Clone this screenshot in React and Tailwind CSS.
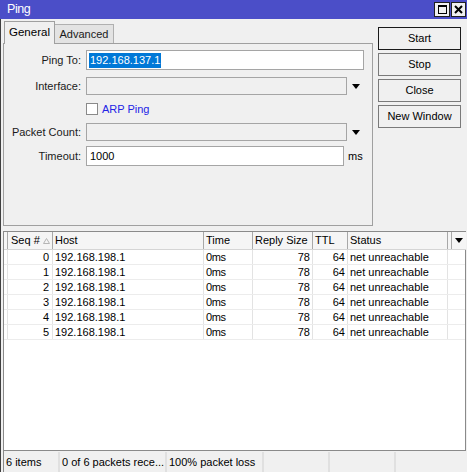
const rows = [0, 1, 2, 3, 4, 5].map((n) => ({
  seq: n,
  host: "192.168.198.1",
  time: "0ms",
  size: 78,
  ttl: 64,
  status: "net unreachable",
}))

function Arrow() {
  return (
    <svg width="8" height="5" viewBox="0 0 8 5" className="block">
      <path d="M0 0H8L4 5Z" fill="#000" />
    </svg>
  )
}

function Button({ children, primary }) {
  return (
    <div
      className={
        "h-[23px] flex items-center justify-center bg-[#f0f0f0] border " +
        (primary ? "border-[#1a1a1a]" : "border-[#7a7a7a]")
      }
    >
      {children}
    </div>
  )
}

function Row({ label, children, className }) {
  return (
    <div className={"flex items-center " + className}>
      <div className="w-[77px] text-right text-[#1a1a1a]">{label}</div>
      <div className="ml-[5px] flex items-center flex-1">{children}</div>
    </div>
  )
}

export default function App() {
  const col = "border-r border-[#e3e3e3]"
  return (
    <div className="w-[467px] h-[472px] bg-[#f0f0f0] flex flex-col overflow-hidden text-[11px] leading-none text-black font-['Liberation_Sans',Arial,sans-serif]">
      {/* title bar */}
      <div className="h-[19px] bg-[#4b4ec8] flex items-center justify-between pl-[7px] pr-[1px]">
        <span className="text-white text-[12.5px] tracking-[-0.4px]">Ping</span>
        <div className="flex gap-[1px]">
          <div className="w-[16px] h-[15px] bg-[#f0f0f0] border border-[#202020] flex items-center justify-center">
            <div className="w-[9px] h-[9px] border border-black border-t-2" />
          </div>
          <div className="w-[15px] h-[15px] bg-[#f0f0f0] border border-[#202020] flex items-center justify-center">
            <svg width="9" height="9" viewBox="0 0 9 9">
              <path d="M1 1L8 8M8 1L1 8" stroke="#000" strokeWidth="2" />
            </svg>
          </div>
        </div>
      </div>

      <div className="flex-1 flex flex-col border-l border-[#404040]">
        {/* top section */}
        <div className="flex h-[207px]">
          <div className="ml-[2px] w-[370px] flex flex-col">
            <div className="h-[24px] flex items-end pl-[1px]">
              <div className="h-[23px] w-[51px] border border-b-0 border-[#a0a0a0] bg-[#f0f0f0] flex items-center justify-center relative top-[1px] text-[11.5px]">
                General
              </div>
              <div className="h-[19px] w-[59px] border border-b-0 border-l-0 border-[#b0b0b0] bg-[#e3e3e3] flex items-center justify-center text-[#1a1a1a]">
                Advanced
              </div>
            </div>
            <div className="flex-1 border border-[#a0a0a0] flex flex-col">
              <Row label="Ping To:" className="mt-[6px] h-[20px]">
                <div className="w-[278px] h-[20px] bg-white border border-[#a5a5a5] flex items-center pl-[2px]">
                  <span className="bg-[#0078d7] text-white px-[1px] py-[2px]">192.168.137.1</span>
                </div>
              </Row>
              <Row label="Interface:" className="mt-[7px] h-[18px]">
                <div className="w-[261px] h-[18px] border border-[#a5a5a5]" />
                <div className="ml-[5px]">
                  <Arrow />
                </div>
              </Row>
              <Row label="" className="mt-[6px] h-[16px]">
                <div className="w-[12px] h-[12px] bg-white border border-[#8a8a8a]" />
                <span className="ml-[4px] text-[#2323e6]">ARP Ping</span>
              </Row>
              <Row label="Packet Count:" className="mt-[6px] h-[18px]">
                <div className="w-[261px] h-[18px] border border-[#a5a5a5]" />
                <div className="ml-[5px]">
                  <Arrow />
                </div>
              </Row>
              <Row label="Timeout:" className="mt-[5px] h-[20px]">
                <div className="w-[258px] h-[20px] bg-white border border-[#a5a5a5] flex items-center pl-[3px]">
                  1000
                </div>
                <span className="ml-[4px]">ms</span>
              </Row>
            </div>
          </div>
          <div className="ml-[5px] w-[83px] pt-[8px] flex flex-col gap-[3px]">
            <Button primary>Start</Button>
            <Button>Stop</Button>
            <Button>Close</Button>
            <Button>New Window</Button>
          </div>
        </div>

        {/* table */}
        <div className="mt-[5px] ml-[2px] mr-[1px] flex-1 flex flex-col border-l border-t border-[#8a8a8a]">
          <div className="h-[18px] flex bg-[#f5f5f5] border-b border-[#d5d5d5]">
            <div className="w-[4px] border-r border-[#a8a8a8]" />
            <div className="w-[45px] border-r border-[#a8a8a8] flex items-center pl-[3px]">
              Seq #
              <svg width="7" height="6" viewBox="0 0 7 6" className="ml-[3px]">
                <path d="M3.5 0.5L6.5 5.5H0.5Z" fill="none" stroke="#b5b5b5" />
              </svg>
            </div>
            <div className="w-[151px] border-r border-[#a8a8a8] flex items-center pl-[2px]">Host</div>
            <div className="w-[49px] border-r border-[#a8a8a8] flex items-center pl-[2px]">Time</div>
            <div className="w-[60px] border-r border-[#a8a8a8] flex items-center pl-[2px]">Reply Size</div>
            <div className="w-[35px] border-r border-[#a8a8a8] flex items-center pl-[2px]">TTL</div>
            <div className="w-[100px] border-r border-[#a8a8a8] flex items-center pl-[2px]">Status</div>
            <div className="w-[4px] border-r border-[#a8a8a8]" />
            <div className="flex-1 flex items-center justify-center">
              <Arrow />
            </div>
          </div>
          <div className="flex-1 bg-white border-r border-b border-[#8a8a8a] flex flex-col">
            {rows.map((r) => (
              <div key={r.seq} className="h-[15px] flex border-b border-[#ececec]">
                <div className={"w-[4px] " + col} />
                <div className={"w-[45px] text-right pr-[3px] flex items-center justify-end " + col}>{r.seq}</div>
                <div className={"w-[151px] pl-[2px] flex items-center " + col}>{r.host}</div>
                <div className={"w-[49px] pl-[2px] flex items-center tracking-[-0.4px] " + col}>{r.time}</div>
                <div className={"w-[60px] pr-[2px] flex items-center justify-end " + col}>{r.size}</div>
                <div className={"w-[35px] pr-[2px] flex items-center justify-end " + col}>{r.ttl}</div>
                <div className={"w-[100px] pl-[2px] flex items-center " + col}>{r.status}</div>
                <div className="flex-1" />
              </div>
            ))}
          </div>
          <div className="h-[20px] flex mt-[1px]">
            <div className="w-[56px] flex items-center pl-[2px] border-r-2 border-[#e0e0e0]">6 items</div>
            <div className="w-[107px] flex items-center pl-[2px] border-r-2 border-[#e0e0e0]">0 of 6 packets rece...</div>
            <div className="w-[97px] flex items-center pl-[2px] border-r-2 border-[#e0e0e0]">100% packet loss</div>
            <div className="w-[66px] border-r-2 border-[#e0e0e0]" />
            <div className="w-[66px] border-r-2 border-[#e0e0e0]" />
            <div className="flex-1" />
          </div>
        </div>
      </div>
    </div>
  )
}
